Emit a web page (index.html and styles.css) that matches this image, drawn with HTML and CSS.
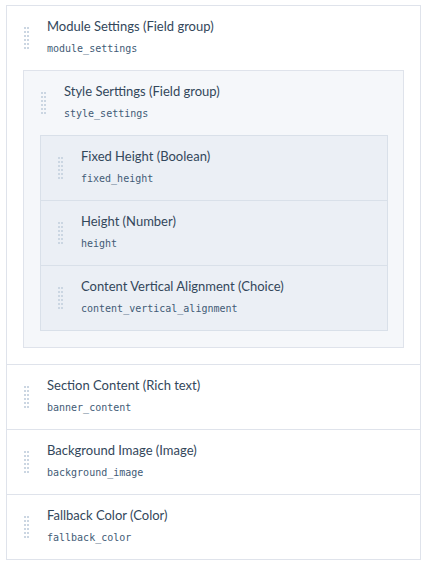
FILE: index.html
```html
<!DOCTYPE html>
<html lang="en">
<head>
<meta charset="utf-8">
<title>Fields</title>
<link rel="stylesheet" href="styles.css">
</head>
<body>
<div class="field-list">
  <div class="field">
    <div class="field-head">
      <span class="handle"><i></i><i></i><i></i><i></i><i></i><i></i><i></i><i></i><i></i><i></i><i></i><i></i></span>
      <div class="field-text">
        <div class="field-label">Module Settings (Field group)</div>
        <code class="field-name">module_settings</code>
      </div>
    </div>
    <div class="group">
      <div class="field-head">
        <span class="handle"><i></i><i></i><i></i><i></i><i></i><i></i><i></i><i></i><i></i><i></i><i></i><i></i></span>
        <div class="field-text">
          <div class="field-label">Style Serttings (Field group)</div>
          <code class="field-name">style_settings</code>
        </div>
      </div>
      <div class="sub-list">
        <div class="sub-field field-head">
          <span class="handle"><i></i><i></i><i></i><i></i><i></i><i></i><i></i><i></i><i></i><i></i><i></i><i></i></span>
          <div class="field-text">
            <div class="field-label">Fixed Height (Boolean)</div>
            <code class="field-name">fixed_height</code>
          </div>
        </div>
        <div class="sub-field field-head">
          <span class="handle"><i></i><i></i><i></i><i></i><i></i><i></i><i></i><i></i><i></i><i></i><i></i><i></i></span>
          <div class="field-text">
            <div class="field-label">Height (Number)</div>
            <code class="field-name">height</code>
          </div>
        </div>
        <div class="sub-field field-head">
          <span class="handle"><i></i><i></i><i></i><i></i><i></i><i></i><i></i><i></i><i></i><i></i><i></i><i></i></span>
          <div class="field-text">
            <div class="field-label">Content Vertical Alignment (Choice)</div>
            <code class="field-name">content_vertical_alignment</code>
          </div>
        </div>
      </div>
    </div>
  </div>
  <div class="field">
    <div class="field-head">
      <span class="handle"><i></i><i></i><i></i><i></i><i></i><i></i><i></i><i></i><i></i><i></i><i></i><i></i></span>
      <div class="field-text">
        <div class="field-label">Section Content (Rich text)</div>
        <code class="field-name">banner_content</code>
      </div>
    </div>
  </div>
  <div class="field">
    <div class="field-head">
      <span class="handle"><i></i><i></i><i></i><i></i><i></i><i></i><i></i><i></i><i></i><i></i><i></i><i></i></span>
      <div class="field-text">
        <div class="field-label">Background Image (Image)</div>
        <code class="field-name">background_image</code>
      </div>
    </div>
  </div>
  <div class="field">
    <div class="field-head">
      <span class="handle"><i></i><i></i><i></i><i></i><i></i><i></i><i></i><i></i><i></i><i></i><i></i><i></i></span>
      <div class="field-text">
        <div class="field-label">Fallback Color (Color)</div>
        <code class="field-name">fallback_color</code>
      </div>
    </div>
  </div>
</div>
</body>
</html>
```
FILE: styles.css
```css
html, body {
  margin: 0;
  padding: 0;
  background: #ffffff;
}

body {
  font-family: Lato, "Open Sans", sans-serif;
  color: #33475b;
}

.field-list {
  width: 415px;
  box-sizing: border-box;
  margin: 5px 0 0 6px;
  border: 1px solid #dfe3eb;
  background: #ffffff;
}

.field + .field {
  border-top: 1px solid #dfe3eb;
}

.field-head {
  display: flex;
  align-items: center;
  height: 64px;
  box-sizing: border-box;
  padding: 11px 0 13px 17px;
}

.handle {
  display: grid;
  grid-template-columns: 2px 2px;
  grid-auto-rows: 2px;
  column-gap: 1px;
  row-gap: 2px;
  flex: none;
  margin-right: 18px;
  margin-top: 2px;
}

.handle i {
  display: block;
  width: 2px;
  height: 2px;
  background: #cbd6e2;
}

.field-text {
  display: flex;
  flex-direction: column;
}

.field-label {
  font-size: 13px;
  line-height: 18px;
  color: #33475b;
  white-space: nowrap;
}

.field-name {
  font-family: "DejaVu Sans Mono", "Liberation Mono", monospace;
  font-size: 10px;
  line-height: 16px;
  margin-top: 6px;
  color: #425b76;
}

.group {
  margin: 0 16px 16px 16px;
  border: 1px solid #dfe3eb;
  background: #f5f7fa;
  padding: 0 0 16px 0;
}

.sub-list {
  margin: 0 15px 0 16px;
  border: 1px solid #d9e0e9;
  background: #ebeff5;
}

.sub-field + .sub-field {
  border-top: 1px solid #d9e0e9;
  height: 65px;
}
```
